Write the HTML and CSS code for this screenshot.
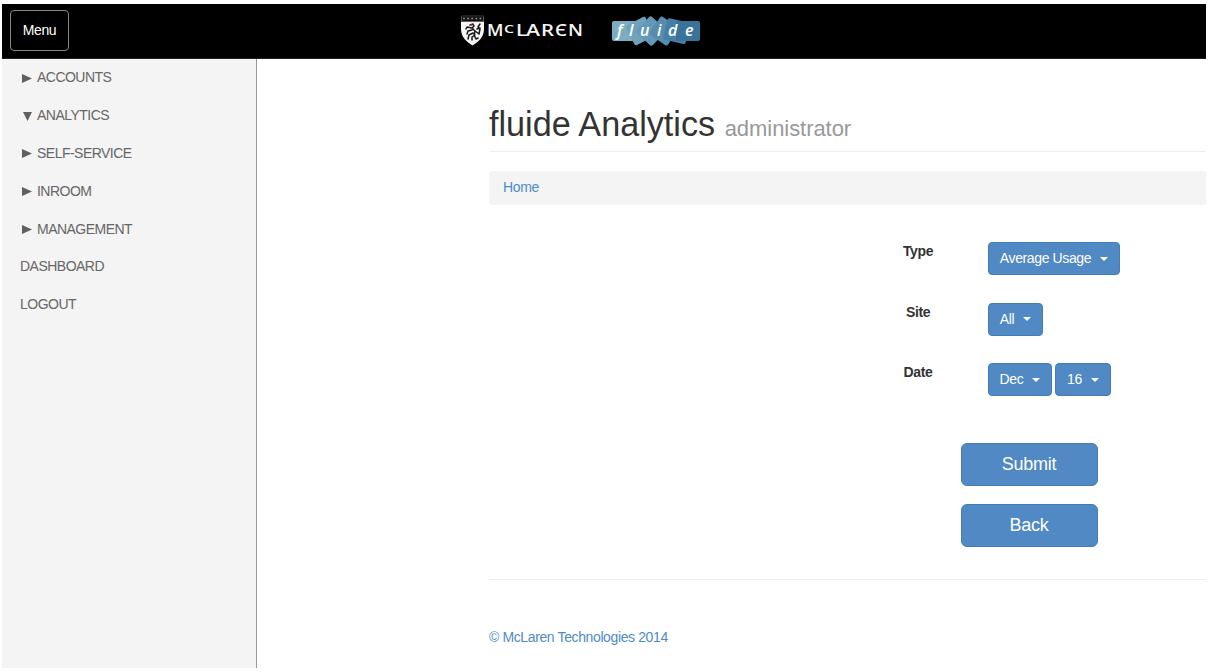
FILE: index.html
```html
<!DOCTYPE html>
<html lang="en">
<head>
<meta charset="utf-8">
<title>fluide Analytics</title>
<link rel="stylesheet" href="styles.css">
</head>
<body>
<div class="page">
  <header class="topbar">
    <button class="menu-btn">Menu</button>
    <svg class="logos" width="242" height="38" viewBox="0 0 242 38" role="img" aria-label="McLaren fluide">
      <path fill="#f5f5f5" d="M1 5.500H24V18C24 26 18.500 31 12.500 34.500C6.500 31 1 26 1 18Z"/>
      <path fill="#151515" stroke="#444" stroke-width=".6" d="M1.300 4.800H23.700V10.500H1.300Z"/>
      <path stroke="#999" stroke-width="1.300" stroke-dasharray="1.600 2.500" d="M3.200 7.500H22.500"/>
      <path fill="none" stroke="#171717" stroke-width="1.500" stroke-linecap="round" stroke-linejoin="round" d="M10 14L13 13L14 15L12 17L15 20L14 24L16 28L18 27M12 17L7 16L6 18M12 19L8 20L7 23M13 22L9 24L8 28M15 24L12 26L12 29M15 20L19 23L20 18L18 16L20 13M17 18L20 17"/>
      <circle cx="11.500" cy="14" r="1" fill="#b33"/>
      <g class="mclaren">
        <text x="27" y="25" font-size="16" textLength="16.500" lengthAdjust="spacingAndGlyphs">M</text>
        <text x="44" y="21.500" font-size="11" textLength="10" lengthAdjust="spacingAndGlyphs">C</text>
        <text x="56" y="25" font-size="16" textLength="11" lengthAdjust="spacingAndGlyphs">L</text>
        <text x="66" y="25" font-size="16" textLength="14" lengthAdjust="spacingAndGlyphs">A</text>
        <text x="81" y="25" font-size="16" textLength="13" lengthAdjust="spacingAndGlyphs">R</text>
        <text x="95" y="25" font-size="16" textLength="12" lengthAdjust="spacingAndGlyphs">Є</text>
        <text x="108" y="25" font-size="16" textLength="15" lengthAdjust="spacingAndGlyphs">N</text>
      </g>
      <g>
        <rect x="152" y="10" width="30" height="20" rx="2" fill="#7baec3"/>
        <rect x="169" y="9" width="22" height="22" rx="2" fill="#70a3bb" transform="rotate(-27 180 20)"/>
        <rect x="180" y="9" width="22" height="22" rx="2" fill="#6399b6" transform="rotate(-47 191 20)"/>
        <rect x="193" y="9" width="22" height="22" rx="2" fill="#578cae" transform="rotate(-56 204 20)"/>
        <rect x="205" y="9" width="23" height="22" rx="2" fill="#467fa3" transform="rotate(13 216 20)"/>
        <rect x="216" y="10" width="24" height="20" rx="2" fill="#38739a"/>
        <g class="fluide">
          <text x="157" y="25">f</text><text x="169" y="25">l</text><text x="180" y="25">u</text><text x="197" y="25">i</text><text x="208" y="25">d</text><text x="225" y="25">e</text>
        </g>
      </g>
    </svg>
  </header>
  <div class="body">
    <nav class="sidebar">
      <a class="sub"><svg width="11" height="10"><path d="M0 1L10 5.500L0 10Z"/></svg>ACCOUNTS</a>
      <a class="sub"><svg width="11" height="10"><path d="M1 1H10L5.500 10Z"/></svg>ANALYTICS</a>
      <a class="sub"><svg width="11" height="10"><path d="M0 1L10 5.500L0 10Z"/></svg>SELF-SERVICE</a>
      <a class="sub"><svg width="11" height="10"><path d="M0 1L10 5.500L0 10Z"/></svg>INROOM</a>
      <a class="sub"><svg width="11" height="10"><path d="M0 1L10 5.500L0 10Z"/></svg>MANAGEMENT</a>
      <a>DASHBOARD</a>
      <a>LOGOUT</a>
    </nav>
    <main class="content">
      <h1>fluide Analytics <small>administrator</small></h1>
      <div class="breadcrumb"><a>Home</a></div>
      <form class="filters">
        <div class="row"><label>Type</label><button type="button" class="btn w-type">Average Usage<i></i></button></div>
        <div class="row"><label>Site</label><button type="button" class="btn w-site">All<i></i></button></div>
        <div class="row"><label>Date</label><button type="button" class="btn w-month">Dec<i></i></button><button type="button" class="btn w-day">16<i></i></button></div>
      </form>
      <div class="actions">
        <button class="btn large">Submit</button>
        <button class="btn large">Back</button>
      </div>
      <footer><a>© McLaren Technologies 2014</a></footer>
    </main>
  </div>
</div>
</body>
</html>
```
FILE: styles.css
```css
* { box-sizing: border-box; }
body {
  margin: 0;
  padding: 4px 2px;
  height: 672px;
  overflow: hidden;
  background: #fff;
  color: #333;
  font: 14px/19px "Liberation Sans", Arial, sans-serif;
  letter-spacing: -0.38px;
}
button { font: inherit; letter-spacing: inherit; }
.page { height: 664px; overflow: hidden; }
.topbar {
  display: flex;
  align-items: flex-start;
  height: 55px;
  padding: 6px 0 0 8px;
  background: #000;
  border-bottom: 1px solid #222;
}
.menu-btn {
  width: 59px;
  height: 41px;
  padding: 0;
  background: #000;
  border: 1px solid #888;
  border-radius: 4px;
  color: #fff;
}
.logos { margin: 1px 0 0 391px; letter-spacing: 0; }
.mclaren {
  fill: #f5f5f5;
  font-family: "Open Sans", "Liberation Sans", sans-serif;
  font-weight: 600;
}
.fluide {
  fill: #fff;
  font: italic 600 16px "Open Sans", sans-serif;
}
.body { display: flex; height: 609px; }
.sidebar {
  flex: none;
  width: 255px;
  background: #f4f4f4;
  border-right: 1px solid #999;
}
.sidebar a {
  display: flex;
  align-items: center;
  height: 37.8px;
  padding-left: 18px;
  color: #666;
  letter-spacing: -0.52px;
}
.sidebar .sub { padding-left: 20px; }
.sidebar svg { margin-right: 4px; fill: #606060; }
.content {
  flex: none;
  width: 1080px;
  margin-left: 232px;
  padding-top: 46px;
}
h1 {
  height: 47px;
  margin: 0 0 19px;
  border-bottom: 1px solid #eee;
  font-size: 34.200px;
  font-weight: 400;
  line-height: 38px;
  letter-spacing: 0;
}
h1 small { color: #999; font-size: 22px; letter-spacing: -0.05px; }
.breadcrumb {
  height: 34px;
  padding: 7px 14px;
  background: #f4f4f4;
  border-radius: 4px;
}
.content a { color: #4f8bc7; }
.filters { padding-top: 37px; }
.row {
  display: flex;
  align-items: flex-start;
  height: 60.5px;
  padding-left: 389px;
}
.row label {
  width: 80px;
  margin-right: 30px;
  font-weight: 700;
  text-align: center;
}
.btn {
  display: flex;
  align-items: center;
  justify-content: center;
  height: 33px;
  padding: 0;
  background: #5089c4;
  border: 1px solid #437db8;
  border-radius: 4px;
  color: #fff;
}
.btn i {
  margin-left: 9px;
  border: 4px solid transparent;
  border-top-color: #fff;
  border-bottom: 0;
}
.w-type { width: 132px; }
.w-site { width: 55px; }
.w-month { width: 64px; margin-right: 3px; }
.w-day { width: 56px; }
.actions {
  display: flex;
  flex-direction: column;
  align-items: center;
  gap: 18px;
  padding: 19px 0 32px;
}
.large {
  width: 137px;
  height: 43px;
  border-radius: 6px;
  font-size: 18px;
  letter-spacing: -0.25px;
}
footer {
  padding-top: 48px;
  border-top: 1px solid #eee;
}
```
